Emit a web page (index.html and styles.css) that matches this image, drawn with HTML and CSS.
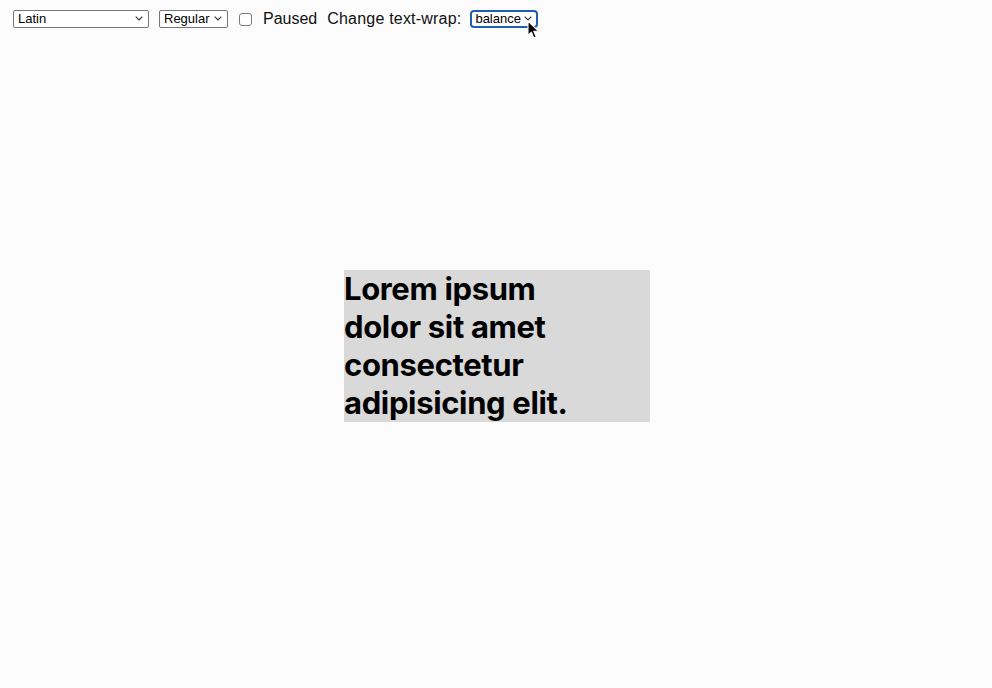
FILE: index.html
```html
<!DOCTYPE html>
<html>
<head>
<meta charset="utf-8">
<link rel="stylesheet" href="styles.css">
</head>
<body>
<div class="stage">
  <header class="controls">
    <span class="sel sel-latin">
      <span class="sel-text">Latin</span>
      <svg class="chev" width="8" height="5" viewBox="0 0 8 5"><path d="M0.7 0.7l3.3 3.3 3.3-3.3" fill="none" stroke="#333" stroke-width="1.1"/></svg>
    </span>
    <span class="sel sel-regular">
      <span class="sel-text">Regular</span>
      <svg class="chev" width="8" height="5" viewBox="0 0 8 5"><path d="M0.7 0.7l3.3 3.3 3.3-3.3" fill="none" stroke="#333" stroke-width="1.1"/></svg>
    </span>
    <span class="check"></span>
    <span class="label">Paused</span>
    <span class="label label-wide">Change text-wrap:</span>
    <span class="sel sel-balance">
      <span class="sel-text">balance</span>
      <svg class="chev" width="8" height="5" viewBox="0 0 8 5"><path d="M0.7 0.7l3.3 3.3 3.3-3.3" fill="none" stroke="#333" stroke-width="1.1"/></svg>
      <svg class="cursor" width="13" height="19" viewBox="0 0 13 19"><path d="M1 1v14.5l3.4-3.3 2.4 5.8 2.4-1-2.4-5.7h4.8z" fill="#000" stroke="#fff" stroke-width="1.1" stroke-linejoin="round"/></svg>
    </span>
  </header>
  <main class="box">
    <p class="lorem">Lorem ipsum<br>dolor sit amet<br>consectetur<br>adipisicing elit.</p>
  </main>
</div>
</body>
</html>
```

FILE: styles.css
```css
html, body {
  margin: 0;
  padding: 0;
  background: #fcfcfc;
}
.stage {
  display: grid;
  height: 100vh;
  grid-template: 1fr / 1fr;
}
.controls {
  grid-area: 1 / 1;
  align-self: start;
  display: flex;
  align-items: center;
  gap: 10px;
  padding: 9px 0 0 13px;
  font-family: "Liberation Sans", Arial, sans-serif;
  font-size: 16px;
  color: #111;
}
.sel {
  position: relative;
  box-sizing: border-box;
  height: 18px;
  border: 1px solid #767676;
  border-radius: 2px;
  background: #fff;
  display: flex;
  align-items: center;
  padding: 0 4px;
  font-size: 13px;
  color: #000;
}
.sel-text { flex: 1; }
.chev { flex: none; margin-left: 2px; margin-right: 1px; }
.sel-latin { width: 136px; }
.sel-regular { width: 69px; }
.sel-balance {
  width: 68px;
  border: 2px solid #1f5fae;
  border-radius: 4px;
  padding: 0 3px;
  margin-left: -1px;
}
.check {
  box-sizing: border-box;
  width: 13px;
  height: 13px;
  border: 1px solid #7a7a7a;
  border-radius: 3px;
  background: #fff;
  margin: 1px 1px 0;
}
.label { line-height: 18px; padding-top: 1px; }
.label-wide { letter-spacing: 0.2px; }
.cursor {
  position: absolute;
  left: 55px;
  top: 8px;
}
.box {
  grid-area: 1 / 1;
  align-self: center;
  justify-self: center;
  width: 306px;
  background: #d9d9d9;
  margin: 4px 0 0 2px;
}
.lorem {
  margin: 0;
  font-family: Inter, "Noto Sans", sans-serif;
  font-weight: 700;
  font-size: 31px;
  line-height: 38px;
  color: #000;
  letter-spacing: -0.35px;
}
```
